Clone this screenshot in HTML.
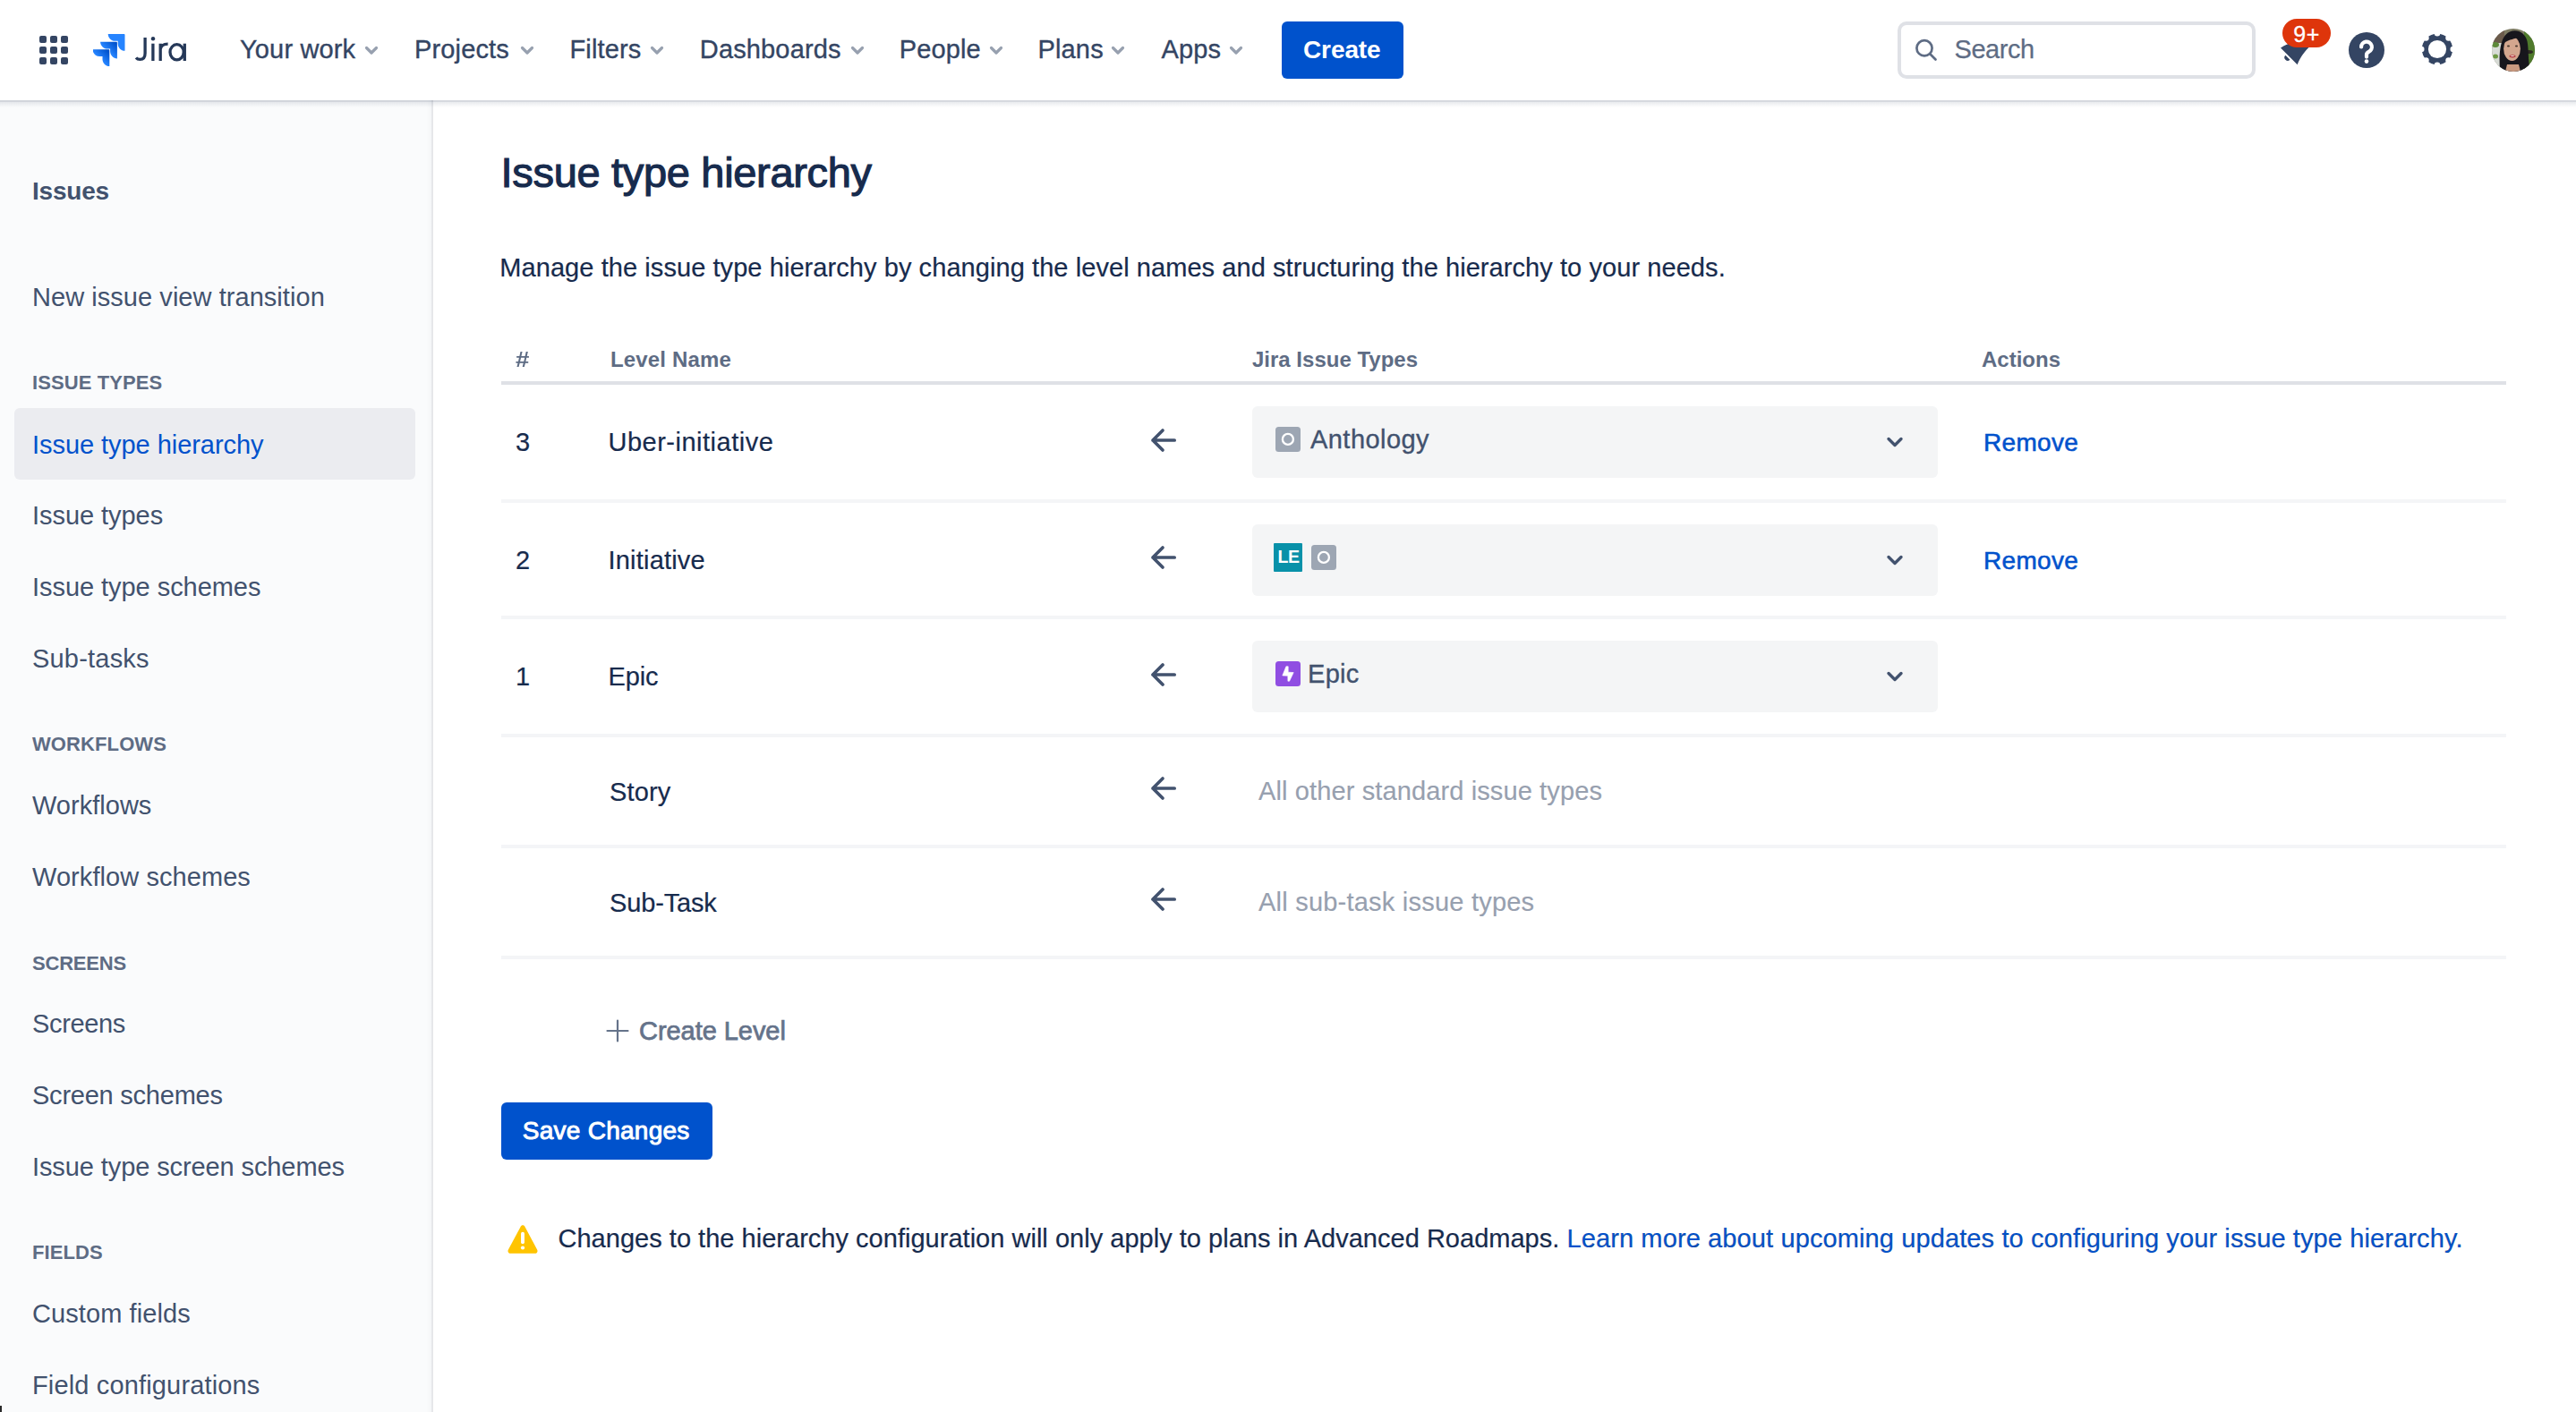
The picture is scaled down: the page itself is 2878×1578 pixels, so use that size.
<!DOCTYPE html>
<html><head><meta charset="utf-8"><title>Issue type hierarchy</title>
<style>
html,body{margin:0;padding:0;width:2878px;height:1578px;overflow:hidden;background:#fff;}
body{position:relative;font-family:"Liberation Sans",sans-serif;}
.t{position:absolute;white-space:nowrap;}
.r{position:absolute;}
</style></head><body>
<div class="r" style="left:0px;top:112px;width:482px;height:1466px;background:#FAFBFC;"></div>
<div class="r" style="left:476px;top:112px;width:6px;height:1466px;background:linear-gradient(to right, rgba(9,30,66,0), rgba(9,30,66,0.025));"></div>
<div class="r" style="left:482px;top:112px;width:2px;height:1466px;background:#E6E7EA;"></div>
<div class="r" style="left:0px;top:1571px;width:2px;height:7px;background:#2A2A2A;"></div>
<div class="t" style="left:36px;top:199.80px;font-size:28px;line-height:28px;color:#42526E;font-weight:700;letter-spacing:-0.2px;">Issues</div>
<div class="t" style="left:36px;top:318.15px;font-size:29px;line-height:29px;color:#42526E;letter-spacing:0.05px;">New issue view transition</div>
<div class="t" style="left:36px;top:417.38px;font-size:22px;line-height:22px;color:#5E6C84;font-weight:700;letter-spacing:0.1px;">ISSUE TYPES</div>
<div class="r" style="left:16px;top:456px;width:448px;height:80px;background:#EBECF0;border-radius:6px;"></div>
<div class="t" style="left:36px;top:482.65px;font-size:29px;line-height:29px;color:#0052CC;letter-spacing:-0.05px;">Issue type hierarchy</div>
<div class="t" style="left:36px;top:562.15px;font-size:29px;line-height:29px;color:#42526E;letter-spacing:-0.05px;">Issue types</div>
<div class="t" style="left:36px;top:642.15px;font-size:29px;line-height:29px;color:#42526E;letter-spacing:-0.05px;">Issue type schemes</div>
<div class="t" style="left:36px;top:722.15px;font-size:29px;line-height:29px;color:#42526E;letter-spacing:0.2px;">Sub-tasks</div>
<div class="t" style="left:36px;top:821.38px;font-size:22px;line-height:22px;color:#5E6C84;font-weight:700;letter-spacing:0.1px;">WORKFLOWS</div>
<div class="t" style="left:36px;top:886.15px;font-size:29px;line-height:29px;color:#42526E;letter-spacing:0.02px;">Workflows</div>
<div class="t" style="left:36px;top:966.15px;font-size:29px;line-height:29px;color:#42526E;letter-spacing:0.07px;">Workflow schemes</div>
<div class="t" style="left:36px;top:1065.88px;font-size:22px;line-height:22px;color:#5E6C84;font-weight:700;letter-spacing:-0.2px;">SCREENS</div>
<div class="t" style="left:36px;top:1130.15px;font-size:29px;line-height:29px;color:#42526E;letter-spacing:-0.35px;">Screens</div>
<div class="t" style="left:36px;top:1210.15px;font-size:29px;line-height:29px;color:#42526E;letter-spacing:-0.23px;">Screen schemes</div>
<div class="t" style="left:36px;top:1290.15px;font-size:29px;line-height:29px;color:#42526E;letter-spacing:-0.1px;">Issue type screen schemes</div>
<div class="t" style="left:36px;top:1388.88px;font-size:22px;line-height:22px;color:#5E6C84;font-weight:700;letter-spacing:0.1px;">FIELDS</div>
<div class="t" style="left:36px;top:1453.75px;font-size:29px;line-height:29px;color:#42526E;letter-spacing:0.09px;">Custom fields</div>
<div class="t" style="left:36px;top:1533.85px;font-size:29px;line-height:29px;color:#42526E;letter-spacing:0.15px;">Field configurations</div>
<div class="r" style="left:0px;top:0px;width:2878px;height:112px;background:#FFFFFF;"></div>
<div class="r" style="left:0px;top:112px;width:2878px;height:2px;background:rgba(9,30,66,0.17);"></div>
<div class="r" style="left:0px;top:114px;width:2878px;height:6px;background:linear-gradient(rgba(9,30,66,0.09),rgba(9,30,66,0));"></div>
<div class="r" style="left:44px;top:40px;width:8px;height:8px;background:#344563;border-radius:2px;"></div>
<div class="r" style="left:44px;top:52px;width:8px;height:8px;background:#344563;border-radius:2px;"></div>
<div class="r" style="left:44px;top:64px;width:8px;height:8px;background:#344563;border-radius:2px;"></div>
<div class="r" style="left:56px;top:40px;width:8px;height:8px;background:#344563;border-radius:2px;"></div>
<div class="r" style="left:56px;top:52px;width:8px;height:8px;background:#344563;border-radius:2px;"></div>
<div class="r" style="left:56px;top:64px;width:8px;height:8px;background:#344563;border-radius:2px;"></div>
<div class="r" style="left:68px;top:40px;width:8px;height:8px;background:#344563;border-radius:2px;"></div>
<div class="r" style="left:68px;top:52px;width:8px;height:8px;background:#344563;border-radius:2px;"></div>
<div class="r" style="left:68px;top:64px;width:8px;height:8px;background:#344563;border-radius:2px;"></div>
<svg class="r" style="left:104px;top:38px" width="36" height="36" viewBox="0 0 36 36">
<defs><linearGradient id="g1" x1="0.95" y1="0.05" x2="0.45" y2="0.55"><stop offset="0.1" stop-color="#0052CC"/><stop offset="1" stop-color="#2684FF"/></linearGradient></defs>
<path d="M35 0H17.7c0 4.3 3.5 7.8 7.8 7.8h3.2v3.1c0 4.3 3.5 7.8 7.8 7.8V1c0-.6-.5-1-1-1z" fill="#2684FF" transform="translate(-1,0)"/>
<path d="M26.4 8.7H9.1c0 4.3 3.5 7.8 7.8 7.8h3.2v3.1c0 4.3 3.5 7.8 7.8 7.8V9.7c0-.6-.5-1-1-1z" fill="url(#g1)" transform="translate(-1,0)"/>
<path d="M17.8 17.3H.5c0 4.3 3.5 7.8 7.8 7.8h3.2v3.1c0 4.3 3.5 7.8 7.8 7.8V18.3c0-.6-.5-1-1-1z" fill="url(#g1)" transform="translate(-1,0)"/>
</svg>
<svg class="r" style="left:148px;top:38px" width="64" height="34" viewBox="0 0 64 34"><g fill="none" stroke="#253858" stroke-width="3.3">
<path d="M14.1 4V21.5C14.1 26.5 11.5 28.4 8.5 28.4C6.5 28.4 5 27.8 4 26.5"/>
<path d="M22.9 10.7V30"/><path d="M31.2 10.7V30M31.2 17C32 12.8 35 11.2 39.6 11.2"/>
<ellipse cx="49.6" cy="20.3" rx="7.6" ry="8.6"/><path d="M58.3 10.7V30"/></g><circle cx="23" cy="5.2" r="2.2" fill="#253858"/></svg>
<div class="t" style="left:268px;top:41.45px;font-size:29px;line-height:29px;color:#344563;letter-spacing:0.15px;-webkit-text-stroke:0.35px #344563;">Your work</div>
<div class="t" style="left:463px;top:41.45px;font-size:29px;line-height:29px;color:#344563;letter-spacing:0.15px;-webkit-text-stroke:0.35px #344563;">Projects</div>
<div class="t" style="left:636.5px;top:41.45px;font-size:29px;line-height:29px;color:#344563;letter-spacing:0.15px;-webkit-text-stroke:0.35px #344563;">Filters</div>
<div class="t" style="left:781.8px;top:41.45px;font-size:29px;line-height:29px;color:#344563;letter-spacing:0.15px;-webkit-text-stroke:0.35px #344563;">Dashboards</div>
<div class="t" style="left:1004.7px;top:41.45px;font-size:29px;line-height:29px;color:#344563;letter-spacing:0.15px;-webkit-text-stroke:0.35px #344563;">People</div>
<div class="t" style="left:1159.5px;top:41.45px;font-size:29px;line-height:29px;color:#344563;letter-spacing:0.15px;-webkit-text-stroke:0.35px #344563;">Plans</div>
<div class="t" style="left:1297.5px;top:41.45px;font-size:29px;line-height:29px;color:#344563;letter-spacing:0.15px;-webkit-text-stroke:0.35px #344563;">Apps</div>
<svg class="r" style="left:407px;top:50px" width="16" height="14" viewBox="0 0 16 14"><path d="M2.5 3.5l5.5 5.5 5.5-5.5" fill="none" stroke="#97A0AF" stroke-width="3.2" stroke-linecap="round" stroke-linejoin="round"/></svg>
<svg class="r" style="left:580.5px;top:50px" width="16" height="14" viewBox="0 0 16 14"><path d="M2.5 3.5l5.5 5.5 5.5-5.5" fill="none" stroke="#97A0AF" stroke-width="3.2" stroke-linecap="round" stroke-linejoin="round"/></svg>
<svg class="r" style="left:726px;top:50px" width="16" height="14" viewBox="0 0 16 14"><path d="M2.5 3.5l5.5 5.5 5.5-5.5" fill="none" stroke="#97A0AF" stroke-width="3.2" stroke-linecap="round" stroke-linejoin="round"/></svg>
<svg class="r" style="left:949.5px;top:50px" width="16" height="14" viewBox="0 0 16 14"><path d="M2.5 3.5l5.5 5.5 5.5-5.5" fill="none" stroke="#97A0AF" stroke-width="3.2" stroke-linecap="round" stroke-linejoin="round"/></svg>
<svg class="r" style="left:1104.5px;top:50px" width="16" height="14" viewBox="0 0 16 14"><path d="M2.5 3.5l5.5 5.5 5.5-5.5" fill="none" stroke="#97A0AF" stroke-width="3.2" stroke-linecap="round" stroke-linejoin="round"/></svg>
<svg class="r" style="left:1240.5px;top:50px" width="16" height="14" viewBox="0 0 16 14"><path d="M2.5 3.5l5.5 5.5 5.5-5.5" fill="none" stroke="#97A0AF" stroke-width="3.2" stroke-linecap="round" stroke-linejoin="round"/></svg>
<svg class="r" style="left:1372.5px;top:50px" width="16" height="14" viewBox="0 0 16 14"><path d="M2.5 3.5l5.5 5.5 5.5-5.5" fill="none" stroke="#97A0AF" stroke-width="3.2" stroke-linecap="round" stroke-linejoin="round"/></svg>
<div class="r" style="left:1432px;top:24px;width:136px;height:64px;background:#0052CC;border-radius:6px;"></div>
<div class="t" style="left:1456px;top:42.30px;font-size:28px;line-height:28px;color:#FFFFFF;font-weight:700;letter-spacing:-0.1px;">Create</div>
<div class="r" style="left:2120px;top:24px;width:392px;height:56px;border:4px solid #DFE1E6;border-radius:10px;background:#fff"></div>
<svg class="r" style="left:2138px;top:42px" width="30" height="30" viewBox="0 0 30 30"><circle cx="12" cy="11.8" r="8.6" fill="none" stroke="#5E6C84" stroke-width="2.7"/><path d="M18.3 18.3l6.2 6.2" stroke="#5E6C84" stroke-width="2.7" stroke-linecap="round"/></svg>
<div class="t" style="left:2183.5px;top:40.95px;font-size:29px;line-height:29px;color:#5E6C84;letter-spacing:-0.45px;-webkit-text-stroke:0.25px #5E6C84;">Search</div>
<svg class="r" style="left:2540px;top:25px" width="50" height="55" viewBox="0 0 50 55"><path d="M8 28.5L26.7 47.2C28.6 42 32.5 35 39.5 28L39.5 18L16 18L16 24.2C13 25.5 10 27 8 28.5Z" fill="#344563"/><path d="M13.4 36.8L18.4 41.8A3.5 3.5 0 0 1 13.4 36.8Z" fill="#344563"/></svg>
<div class="r" style="left:2550px;top:21px;width:54px;height:32px;border-radius:16px;background:#DE350B"></div>
<div class="r" style="left:2550px;top:21px;width:54px;height:32px;display:flex;align-items:center;justify-content:center;color:#fff;font-size:25px;line-height:32px;-webkit-text-stroke:0.3px #fff;letter-spacing:0.5px"><span style="position:relative;top:0.5px">9+</span></div>
<svg class="r" style="left:2624px;top:35.5px" width="40" height="40" viewBox="0 0 40 40"><circle cx="20" cy="20" r="20" fill="#344563"/><path d="M14.1 16.5A5.9 5.9 0 1 1 22.5 21.8C21 22.6 20 23.5 20 25V27.6" fill="none" stroke="#fff" stroke-width="4.2" stroke-linecap="round"/><circle cx="20" cy="32.6" r="2.3" fill="#fff"/></svg>
<svg class="r" style="left:2705.4px;top:37.4px" width="36" height="36" viewBox="0 0 36 36"><defs><mask id="gm"><rect width="36" height="36" fill="#fff"/><circle cx="18.00" cy="0.20" r="3.3" fill="#000"/><circle cx="30.59" cy="5.41" r="3.3" fill="#000"/><circle cx="35.80" cy="18.00" r="3.3" fill="#000"/><circle cx="30.59" cy="30.59" r="3.3" fill="#000"/><circle cx="18.00" cy="35.80" r="3.3" fill="#000"/><circle cx="5.41" cy="30.59" r="3.3" fill="#000"/><circle cx="0.20" cy="18.00" r="3.3" fill="#000"/><circle cx="5.41" cy="5.41" r="3.3" fill="#000"/><circle cx="18" cy="18" r="10.1" fill="#000"/></mask></defs><circle cx="18" cy="18" r="17.2" fill="#344563" mask="url(#gm)"/></svg>
<svg class="r" style="left:2784px;top:32px" width="48" height="48" viewBox="0 0 48 48"><defs><clipPath id="av"><circle cx="24" cy="24" r="24"/></clipPath></defs>
<g clip-path="url(#av)"><rect width="48" height="48" fill="#7C7A62"/><rect x="0" y="0" width="14" height="16" fill="#6B5B4C"/><rect x="0" y="16" width="12" height="28" fill="#D8DCD6"/>
<ellipse cx="4" cy="18" rx="4" ry="3" fill="#5E8A3A"/><ellipse cx="4" cy="31" rx="3" ry="2.5" fill="#6F9A45"/>
<rect x="36" y="0" width="12" height="48" fill="#4F7A2C"/><ellipse cx="41" cy="26" rx="5" ry="2" fill="#2E2A22"/>
<path d="M9 48C8 30 8 9 20 3.5C28 0 37 4 39.5 14C41.5 24 40 36 43 46L43 48Z" fill="#17161C"/>
<ellipse cx="22.5" cy="22.5" rx="9.4" ry="13.5" fill="#D3A68E"/><path d="M17 40L30 40L32 48L15 48Z" fill="#C99A80"/>
<path d="M13 16C15 9 22 6.5 30 10C26 11 20 12 13 16Z" fill="#17161C"/>
<ellipse cx="18.5" cy="19.5" rx="1.6" ry="0.9" fill="#4A3A30"/><ellipse cx="27.5" cy="19.5" rx="1.6" ry="0.9" fill="#4A3A30"/>
<ellipse cx="23" cy="30.8" rx="3.6" ry="1.6" fill="#B8434A"/><ellipse cx="23" cy="30.5" rx="2" ry="0.6" fill="#F2E6E0"/></g></svg>
<div class="t" style="left:559.6px;top:169.31px;font-size:47px;line-height:47px;color:#172B4D;letter-spacing:-0.32px;-webkit-text-stroke:1.15px #172B4D;">Issue type hierarchy</div>
<div class="t" style="left:558.3px;top:285.25px;font-size:29px;line-height:29px;color:#172B4D;letter-spacing:0.07px;-webkit-text-stroke:0.2px #172B4D;">Manage the issue type hierarchy by changing the level names and structuring the hierarchy to your needs.</div>
<div class="t" style="left:576px;top:390.28px;font-size:24px;line-height:24px;color:#5E6C84;font-weight:700;transform:scaleX(1.15);transform-origin:left;">#</div>
<div class="t" style="left:682px;top:390.28px;font-size:24px;line-height:24px;color:#5E6C84;font-weight:700;letter-spacing:0.15px;">Level Name</div>
<div class="t" style="left:1399px;top:390.28px;font-size:24px;line-height:24px;color:#5E6C84;font-weight:700;">Jira Issue Types</div>
<div class="t" style="left:2214px;top:390.28px;font-size:24px;line-height:24px;color:#5E6C84;font-weight:700;">Actions</div>
<div class="r" style="left:560px;top:426px;width:2240px;height:4px;background:#DFE1E6;"></div>
<div class="r" style="left:560px;top:558px;width:2240px;height:4px;background:#F4F5F7;"></div>
<div class="t" style="left:576px;top:480.45px;font-size:29px;line-height:29px;color:#172B4D;letter-spacing:-0.05px;-webkit-text-stroke:0.2px #172B4D;">3</div>
<div class="t" style="left:679.5px;top:480.45px;font-size:29px;line-height:29px;color:#172B4D;letter-spacing:0.5px;-webkit-text-stroke:0.2px #172B4D;">Uber-initiative</div>
<svg class="r" style="left:1284px;top:477.5px" width="32" height="28" viewBox="0 0 32 28"><path d="M28.2 14H4M15 3L4 14 15 25" fill="none" stroke="#42526E" stroke-width="3.7" stroke-linecap="round" stroke-linejoin="round"/></svg>
<div class="r" style="left:1399px;top:454px;width:766px;height:80px;background:#F4F5F6;border-radius:6px;"></div>
<svg class="r" style="left:1425px;top:477.0px" width="28" height="28" viewBox="0 0 28 28"><rect width="28" height="28" rx="3.5" fill="#9DA6B3"/><circle cx="13.9" cy="13.9" r="6" fill="none" stroke="#fff" stroke-width="2.3"/></svg>
<div class="t" style="left:1464px;top:476.95px;font-size:29px;line-height:29px;color:#42526E;letter-spacing:0.45px;-webkit-text-stroke:0.35px #42526E;">Anthology</div>
<svg class="r" style="left:2107px;top:487.0px" width="20" height="14" viewBox="0 0 20 14"><path d="M3 3.5l7 7 7-7" fill="none" stroke="#42526E" stroke-width="3.4" stroke-linecap="round" stroke-linejoin="round"/></svg>
<div class="t" style="left:2216px;top:481.30px;font-size:28px;line-height:28px;color:#0052CC;letter-spacing:0.3px;-webkit-text-stroke:0.55px #0052CC;">Remove</div>
<div class="r" style="left:560px;top:688px;width:2240px;height:4px;background:#F4F5F7;"></div>
<div class="t" style="left:576px;top:611.95px;font-size:29px;line-height:29px;color:#172B4D;letter-spacing:-0.05px;-webkit-text-stroke:0.2px #172B4D;">2</div>
<div class="t" style="left:679.5px;top:611.95px;font-size:29px;line-height:29px;color:#172B4D;letter-spacing:0.2px;-webkit-text-stroke:0.2px #172B4D;">Initiative</div>
<svg class="r" style="left:1284px;top:609.0px" width="32" height="28" viewBox="0 0 32 28"><path d="M28.2 14H4M15 3L4 14 15 25" fill="none" stroke="#42526E" stroke-width="3.7" stroke-linecap="round" stroke-linejoin="round"/></svg>
<div class="r" style="left:1399px;top:586px;width:766px;height:80px;background:#F4F5F6;border-radius:6px;"></div>
<div class="r" style="left:1423px;top:607.0px;width:32px;height:32px;background:#0891A9;border-radius:1px"></div>
<div class="t" style="left:1427.6px;top:613.49px;font-size:19.5px;line-height:19.5px;color:#FFFFFF;font-weight:700;letter-spacing:-0.4px;">LE</div>
<svg class="r" style="left:1465px;top:609.0px" width="28" height="28" viewBox="0 0 28 28"><rect width="28" height="28" rx="3.5" fill="#9DA6B3"/><circle cx="13.9" cy="13.9" r="6" fill="none" stroke="#fff" stroke-width="2.3"/></svg>
<svg class="r" style="left:2107px;top:619.0px" width="20" height="14" viewBox="0 0 20 14"><path d="M3 3.5l7 7 7-7" fill="none" stroke="#42526E" stroke-width="3.4" stroke-linecap="round" stroke-linejoin="round"/></svg>
<div class="t" style="left:2216px;top:612.80px;font-size:28px;line-height:28px;color:#0052CC;letter-spacing:0.3px;-webkit-text-stroke:0.55px #0052CC;">Remove</div>
<div class="r" style="left:560px;top:820px;width:2240px;height:4px;background:#F4F5F7;"></div>
<div class="t" style="left:576px;top:742.45px;font-size:29px;line-height:29px;color:#172B4D;letter-spacing:-0.05px;-webkit-text-stroke:0.2px #172B4D;">1</div>
<div class="t" style="left:679.5px;top:742.45px;font-size:29px;line-height:29px;color:#172B4D;letter-spacing:-0.1px;-webkit-text-stroke:0.2px #172B4D;">Epic</div>
<svg class="r" style="left:1284px;top:739.5px" width="32" height="28" viewBox="0 0 32 28"><path d="M28.2 14H4M15 3L4 14 15 25" fill="none" stroke="#42526E" stroke-width="3.7" stroke-linecap="round" stroke-linejoin="round"/></svg>
<div class="r" style="left:1399px;top:716px;width:766px;height:80px;background:#F4F5F6;border-radius:6px;"></div>
<svg class="r" style="left:1425px;top:739.0px" width="28" height="28" viewBox="0 0 28 28"><rect width="28" height="28" rx="3.5" fill="#904EE2"/><path d="M11.9 5.8L14.2 5.8L14.2 12.2L20.2 12.6L15.6 22.2L13.9 22.2L13.8 16.3L7.8 16.0Z" fill="#fff" stroke="#fff" stroke-width="0.6" stroke-linejoin="round"/></svg>
<div class="t" style="left:1461px;top:738.95px;font-size:29px;line-height:29px;color:#42526E;letter-spacing:0.3px;-webkit-text-stroke:0.35px #42526E;">Epic</div>
<svg class="r" style="left:2107px;top:749.0px" width="20" height="14" viewBox="0 0 20 14"><path d="M3 3.5l7 7 7-7" fill="none" stroke="#42526E" stroke-width="3.4" stroke-linecap="round" stroke-linejoin="round"/></svg>
<div class="r" style="left:560px;top:944px;width:2240px;height:4px;background:#F4F5F7;"></div>
<div class="t" style="left:681px;top:870.95px;font-size:29px;line-height:29px;color:#172B4D;letter-spacing:0.15px;-webkit-text-stroke:0.2px #172B4D;">Story</div>
<svg class="r" style="left:1284px;top:867.0px" width="32" height="28" viewBox="0 0 32 28"><path d="M28.2 14H4M15 3L4 14 15 25" fill="none" stroke="#42526E" stroke-width="3.7" stroke-linecap="round" stroke-linejoin="round"/></svg>
<div class="t" style="left:1406px;top:869.95px;font-size:29px;line-height:29px;color:#97A0AF;letter-spacing:0.12px;-webkit-text-stroke:0.15px #97A0AF;">All other standard issue types</div>
<div class="r" style="left:560px;top:1068px;width:2240px;height:4px;background:#F4F5F7;"></div>
<div class="t" style="left:681px;top:995.05px;font-size:29px;line-height:29px;color:#172B4D;letter-spacing:-0.15px;-webkit-text-stroke:0.2px #172B4D;">Sub-Task</div>
<svg class="r" style="left:1284px;top:991.1px" width="32" height="28" viewBox="0 0 32 28"><path d="M28.2 14H4M15 3L4 14 15 25" fill="none" stroke="#42526E" stroke-width="3.7" stroke-linecap="round" stroke-linejoin="round"/></svg>
<div class="t" style="left:1406px;top:994.05px;font-size:29px;line-height:29px;color:#97A0AF;letter-spacing:0.22px;-webkit-text-stroke:0.15px #97A0AF;">All sub-task issue types</div>
<svg class="r" style="left:676px;top:1138px" width="28" height="28" viewBox="0 0 28 28"><path d="M14 2.5v23M2.5 14h23" stroke="#65738A" stroke-width="2.2" stroke-linecap="round"/></svg>
<div class="t" style="left:714px;top:1138.45px;font-size:29px;line-height:29px;color:#65738A;letter-spacing:-0.05px;-webkit-text-stroke:0.75px #65738A;">Create Level</div>
<div class="r" style="left:560px;top:1232px;width:236px;height:64px;background:#0052CC;border-radius:6px;"></div>
<div class="t" style="left:583.8px;top:1250.30px;font-size:28px;line-height:28px;color:#FFFFFF;letter-spacing:0.26px;-webkit-text-stroke:0.95px #FFFFFF;">Save Changes</div>
<svg class="r" style="left:566px;top:1366.5px" width="36" height="36" viewBox="0 0 36 36"><path d="M15.9 3.6c1-1.8 3.3-1.8 4.3 0l14 26.2c.9 1.8-.3 4-2.3 4H4.1c-2 0-3.2-2.2-2.3-4z" fill="#FFC400"/><path d="M18 11.6V21.3" stroke="#fff" stroke-width="3.9" stroke-linecap="round"/><circle cx="18" cy="27.5" r="2.1" fill="#fff"/></svg>
<div class="t" style="left:623.5px;top:1370.45px;font-size:29px;line-height:29px;color:#172B4D;letter-spacing:0.02px;-webkit-text-stroke:0.2px #172B4D;">Changes to the hierarchy configuration will only apply to plans in Advanced Roadmaps. <span style="color:#0052CC;letter-spacing:0.115px">Learn more about upcoming updates to configuring your issue type hierarchy.</span></div>
</body></html>
